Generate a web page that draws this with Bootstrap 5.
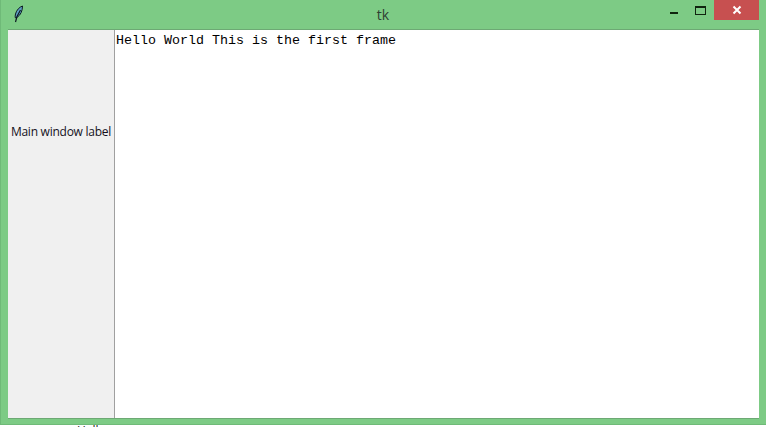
<!DOCTYPE html>
<html lang="en">

<head>
    <meta charset="UTF-8">
    <title>tk</title>
    <link href="https://cdn.jsdelivr.net/npm/bootstrap@5.3.3/dist/css/bootstrap.min.css" rel="stylesheet">
    <style>
        html, body { height: 100%; overflow: hidden; background: #fff; }
        .tk-window { height: 425px; background: #7dcb85; border-left: 1px solid #6fba78; border-bottom: 1px solid #6fba78; }
        .tk-titlebar { height: 29px; font-family: "Open Sans", "Liberation Sans", sans-serif; font-size: 14px; color: #2f3f33; }
        .tk-feather { width: 105px; padding-left: 13px; padding-top: 1px; }
        .tk-title { line-height: 30px; }
        .tk-controls { width: 106px; height: 20px; padding-right: 7px; }
        .tk-ctl { width: 27px; height: 20px; padding-top: 1px; }
        .tk-close { width: 45px; height: 20px; background: #c75050; }
        .tk-client { height: 390px; margin: 0 7px; border-top: 1px solid #6da974; border-bottom: 1px solid #6da974; background: #fff; }
        .tk-label { width: 107px; padding-bottom: 184px; background: #f0f0f0; border-right: 1px solid #a0a0a0; font-family: "Open Sans", "Liberation Sans", sans-serif; font-size: 12px; color: #14101c; white-space: nowrap; letter-spacing: -.25px; }
        .tk-text { padding: 3px 1px; font-family: "Liberation Mono", monospace; font-size: 13.33px; line-height: 16px; color: #000; }
        .tk-under { height: 2px; overflow: hidden; padding-left: 77px; font-family: "Open Sans", "Liberation Sans", sans-serif; font-size: 12px; line-height: 11px; color: #222; }
    </style>
</head>

<body>
    <div class="tk-window d-flex flex-column">
        <div class="tk-titlebar d-flex align-items-start">
            <div class="tk-feather">
                <svg width="10" height="18" viewBox="0 0 10 18" class="d-block mt-1">
                    <path d="M8.500 1C5.500 2 2.500 5 1.500 9c-.4 1.600-.4 2.800-.2 3.800L3.500 12c3-2 5-6 5-11z" fill="#5f9fc4" stroke="#0b1a22" stroke-width="1"/>
                    <path d="M6.500 5 3 11.500 1.500 17" fill="none" stroke="#0b1a22" stroke-width="1.200"/>
                </svg>
            </div>
            <div class="tk-title flex-grow-1 text-center">tk</div>
            <div class="tk-controls d-flex">
                <div class="tk-ctl d-flex align-items-center justify-content-center">
                    <svg width="10" height="10" viewBox="0 0 10 10"><rect x="1" y="6" width="8" height="2" fill="#10240f"/></svg>
                </div>
                <div class="tk-ctl d-flex align-items-center justify-content-center">
                    <svg width="11" height="10" viewBox="0 0 11 10"><rect x=".5" y=".5" width="10" height="8" fill="none" stroke="#10240f" stroke-width="1"/><rect x="1" y="1" width="9" height="1" fill="#10240f"/></svg>
                </div>
                <div class="tk-close d-flex align-items-center justify-content-center">
                    <svg width="10" height="10" viewBox="0 0 10 10"><path d="M1.500 1.500 8.500 8.500M8.500 1.500 1.500 8.500" stroke="#fff" stroke-width="2"/></svg>
                </div>
            </div>
        </div>
        <div class="tk-client d-flex">
            <div class="tk-label d-flex align-items-center justify-content-center">Main window label</div>
            <div class="tk-text flex-grow-1">Hello World This is the first frame</div>
        </div>
    </div>
    <div class="tk-under">Hello</div>
</body>

</html>
